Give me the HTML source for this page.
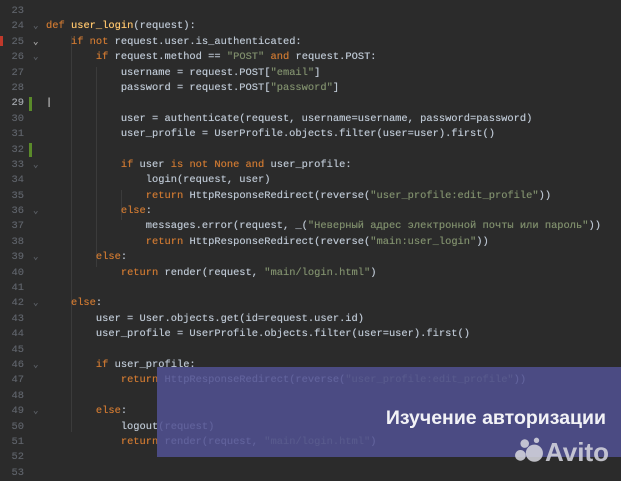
<!DOCTYPE html>
<html><head><meta charset="utf-8"><style>
html,body{margin:0;padding:0;width:621px;height:480px;overflow:hidden;background:#2b2b2b}
#code{position:absolute;left:0;top:4px;font-family:"Liberation Mono","DejaVu Sans Mono",monospace;font-size:10.4px;color:#bcc6d2;text-shadow:0 0 0.4px currentColor}
.l{height:15.4px;line-height:15.4px;white-space:pre;position:relative}
.n{position:absolute;left:0;width:24px;text-align:right;color:#5d6168}
.t{position:absolute;left:46px}
.f{position:absolute;left:33px;color:#5d6168;font-size:9px}
.k{color:#cc7832}.s{color:#7f8e6c}.d{color:#ffc66d}
.g{position:absolute;width:1px;background:#3b3b3b}
.ch{position:absolute;left:29px;width:3px;background:#5a8a2a}
#ov{position:absolute;left:157px;top:367px;width:464px;height:90px;background:rgba(80,80,145,0.86)}
#ti{position:absolute;right:15px;top:40px;color:#f2f2f6;font:bold 19.5px "Liberation Sans","DejaVu Sans",sans-serif}
#av{position:absolute;right:12px;top:70px;color:#d8d8e0;font:bold 26px "Liberation Sans",sans-serif;opacity:.85}
</style></head><body>
<div class="g" style="left:71px;top:36px;height:396px"></div>
<div class="g" style="left:96px;top:67px;height:200px"></div>
<div class="g" style="left:121px;top:190px;height:30px"></div>
<div class="ch" style="top:97px;height:14px"></div>
<div class="ch" style="top:143px;height:14px"></div>
<div style="position:absolute;left:0;top:36px;width:3px;height:10px;background:#c0392b"></div>
<div id="code">
<div class="l"><span class="n">23</span></div>
<div class="l"><span class="n">24</span><span class="f">⌄</span><span class="t"><span class="k">def</span> <span class="d">user_login</span>(request):</span></div>
<div class="l"><span class="n">25</span><span class="f" style="color:#aaa">⌄</span><span class="t">    <span class="k">if not</span> request.user.is_authenticated:</span></div>
<div class="l"><span class="n">26</span><span class="f">⌄</span><span class="t">        <span class="k">if</span> request.method == <span class="s">"POST"</span> <span class="k">and</span> request.POST:</span></div>
<div class="l"><span class="n">27</span><span class="t">            username = request.POST[<span class="s">"email"</span>]</span></div>
<div class="l"><span class="n">28</span><span class="t">            password = request.POST[<span class="s">"password"</span>]</span></div>
<div class="l"><span class="n" style="color:#a0a4aa">29</span><span class="t" style="color:#ccc">|</span></div>
<div class="l"><span class="n">30</span><span class="t">            user = authenticate(request, username=username, password=password)</span></div>
<div class="l"><span class="n">31</span><span class="t">            user_profile = UserProfile.objects.filter(user=user).first()</span></div>
<div class="l"><span class="n">32</span></div>
<div class="l"><span class="n">33</span><span class="f">⌄</span><span class="t">            <span class="k">if</span> user <span class="k">is not None and</span> user_profile:</span></div>
<div class="l"><span class="n">34</span><span class="t">                login(request, user)</span></div>
<div class="l"><span class="n">35</span><span class="t">                <span class="k">return</span> HttpResponseRedirect(reverse(<span class="s">"user_profile:edit_profile"</span>))</span></div>
<div class="l"><span class="n">36</span><span class="f">⌄</span><span class="t">            <span class="k">else</span>:</span></div>
<div class="l"><span class="n">37</span><span class="t">                messages.error(request, _(<span class="s">"Неверный адрес электронной почты или пароль"</span>))</span></div>
<div class="l"><span class="n">38</span><span class="t">                <span class="k">return</span> HttpResponseRedirect(reverse(<span class="s">"main:user_login"</span>))</span></div>
<div class="l"><span class="n">39</span><span class="f">⌄</span><span class="t">        <span class="k">else</span>:</span></div>
<div class="l"><span class="n">40</span><span class="t">            <span class="k">return</span> render(request, <span class="s">"main/login.html"</span>)</span></div>
<div class="l"><span class="n">41</span></div>
<div class="l"><span class="n">42</span><span class="f">⌄</span><span class="t">    <span class="k">else</span>:</span></div>
<div class="l"><span class="n">43</span><span class="t">        user = User.objects.get(id=request.user.id)</span></div>
<div class="l"><span class="n">44</span><span class="t">        user_profile = UserProfile.objects.filter(user=user).first()</span></div>
<div class="l"><span class="n">45</span></div>
<div class="l"><span class="n">46</span><span class="f">⌄</span><span class="t">        <span class="k">if</span> user_profile:</span></div>
<div class="l"><span class="n">47</span><span class="t">            <span class="k">return</span> HttpResponseRedirect(reverse(<span class="s">"user_profile:edit_profile"</span>))</span></div>
<div class="l"><span class="n">48</span></div>
<div class="l"><span class="n">49</span><span class="f">⌄</span><span class="t">        <span class="k">else</span>:</span></div>
<div class="l"><span class="n">50</span><span class="t">            logout(request)</span></div>
<div class="l"><span class="n">51</span><span class="t">            <span class="k">return</span> render(request, <span class="s">"main/login.html"</span>)</span></div>
<div class="l"><span class="n">52</span></div>
<div class="l"><span class="n">53</span></div>
</div>
<div id="ov">
<div id="ti">Изучение авторизации</div>
<div id="av"><svg width="30" height="26" viewBox="0 0 28 24" style="vertical-align:-2px;margin-right:1px"><circle cx="19" cy="15" r="8" fill="#d8d8e0"/><circle cx="6" cy="17" r="5" fill="#d8d8e0"/><circle cx="10" cy="6" r="4" fill="#d8d8e0"/><circle cx="21" cy="3" r="2.5" fill="#d8d8e0"/></svg>Avito</div>
</div>
</body></html>
